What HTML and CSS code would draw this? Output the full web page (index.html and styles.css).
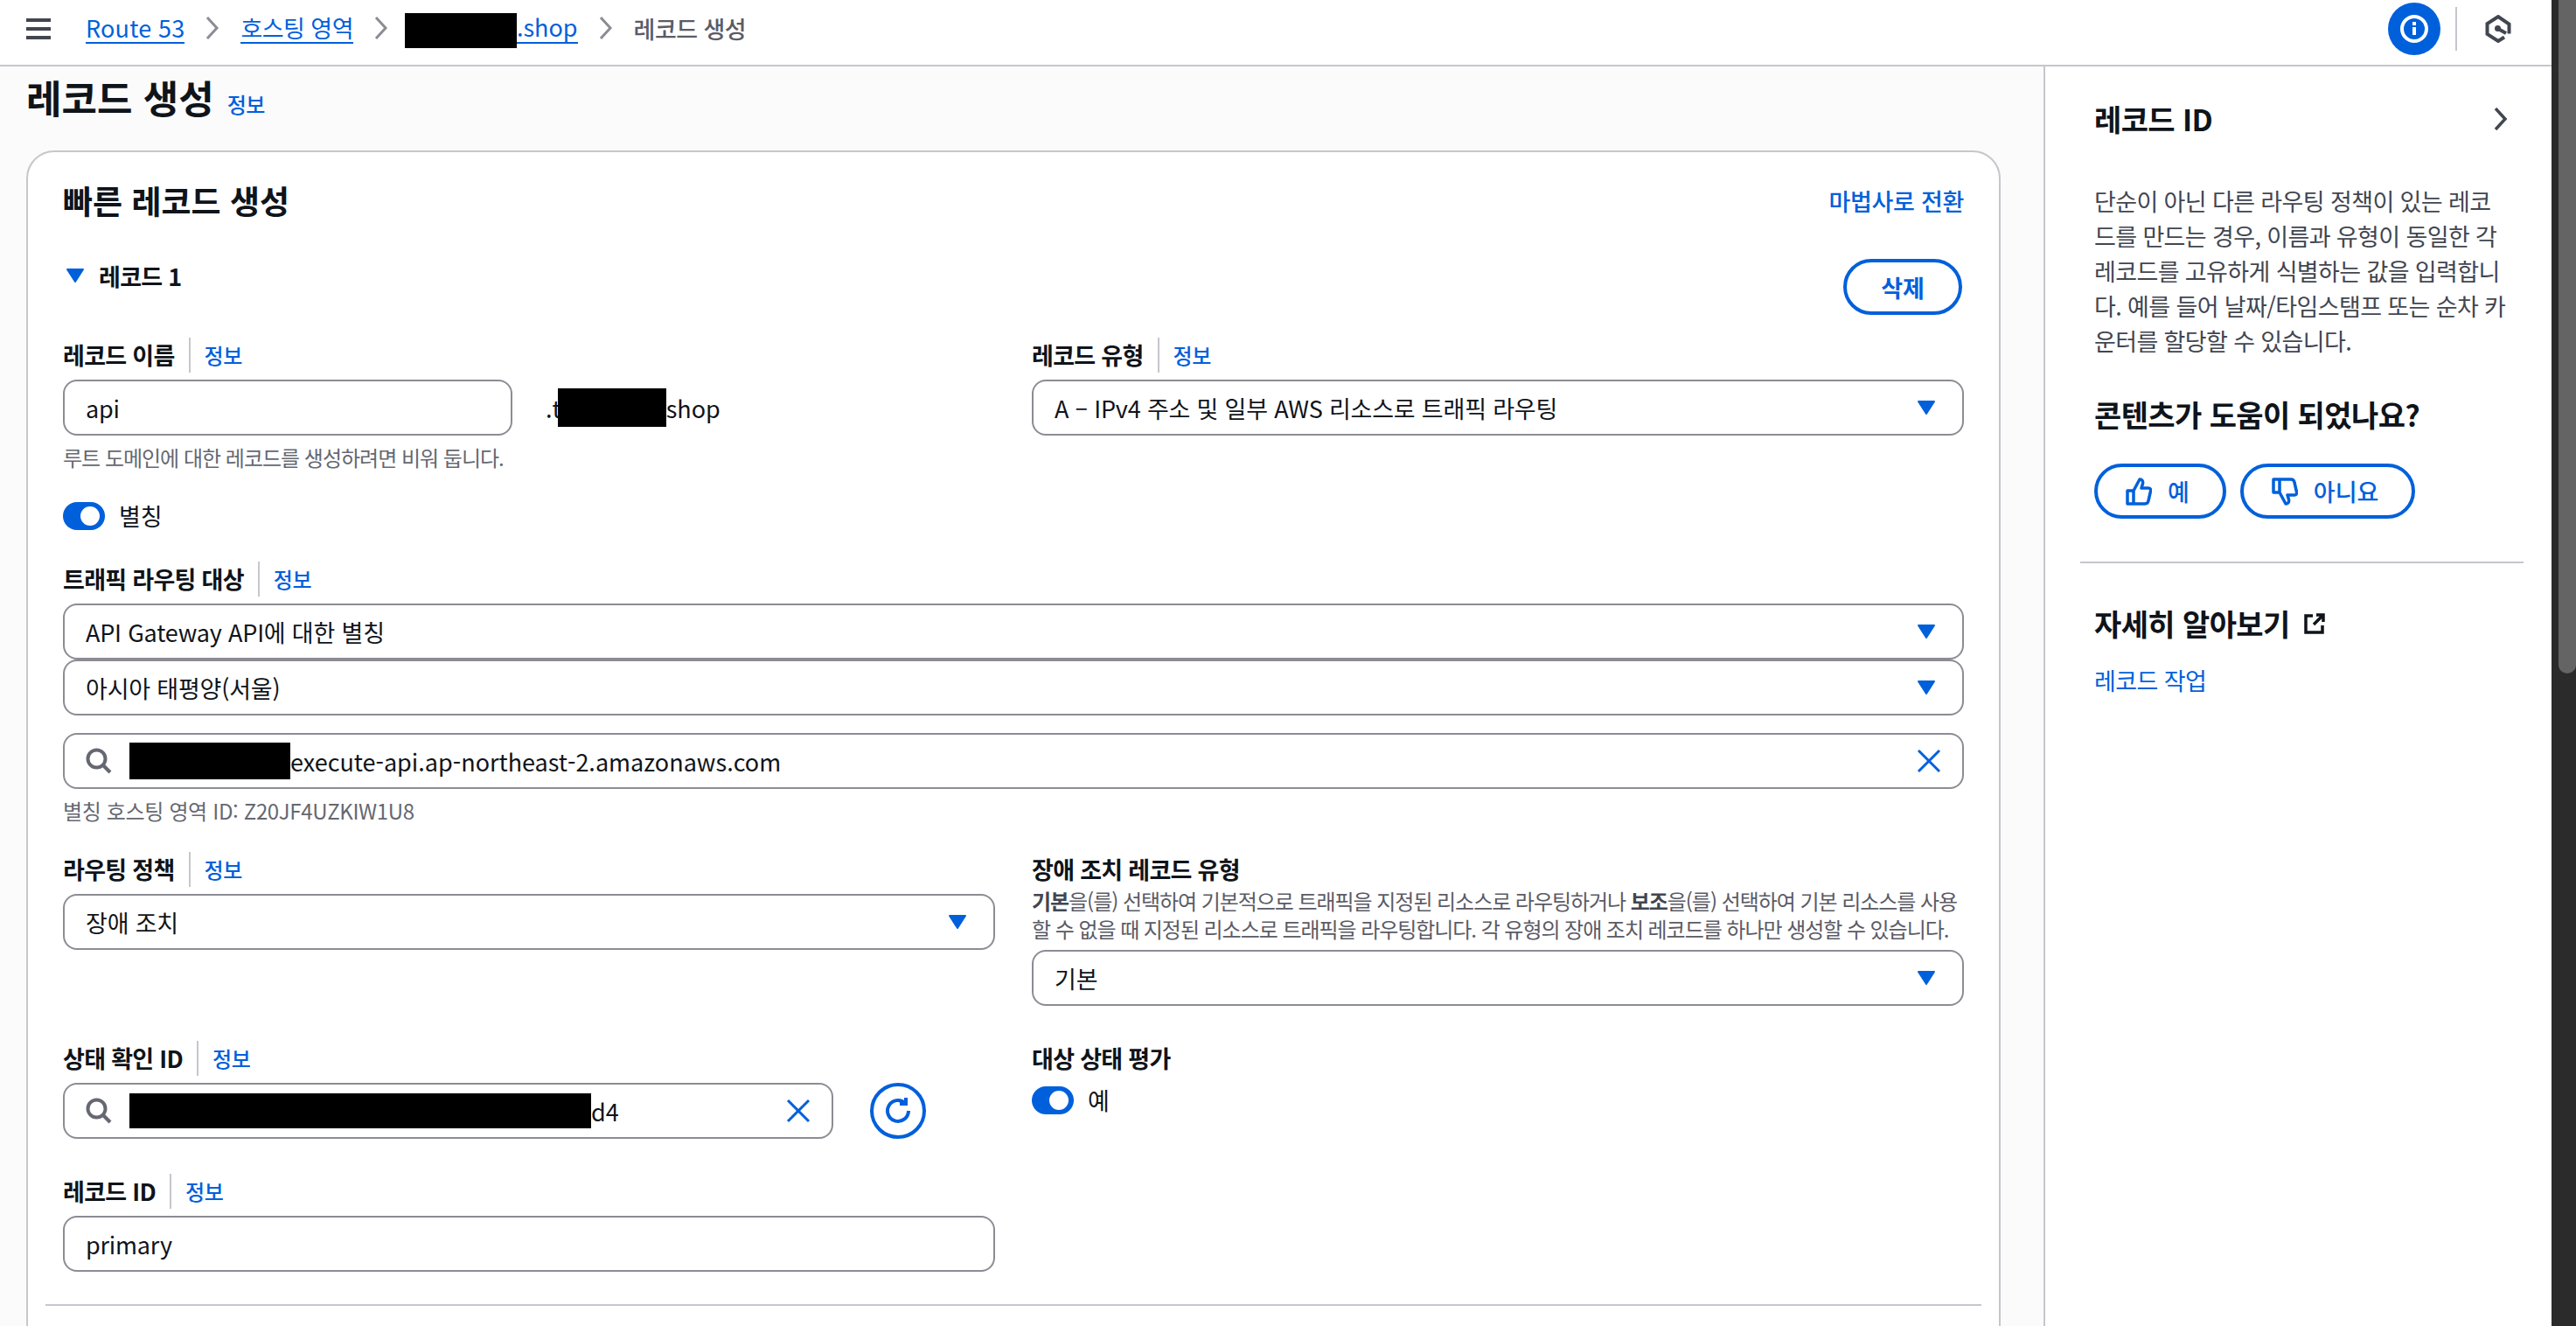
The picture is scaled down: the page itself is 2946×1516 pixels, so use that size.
FILE: index.html
```html
<!DOCTYPE html>
<html lang="ko">
<head>
<meta charset="utf-8">
<title>레코드 생성</title>
<link rel="stylesheet" href="styles.css">
</head>
<body>
<div class="app">
  <div class="page">
    <header class="topbar">
      <svg class="burger" viewBox="0 0 28 24"><path d="M0 2h28M0 12h28M0 22h28"/></svg>
      <nav class="crumbs">
        <a class="crumb crumb-en">Route 53</a>
        <svg class="chev" viewBox="0 0 16 26"><path d="M2 1l11 12L2 25"/></svg>
        <a class="crumb crumb-ko">호스팅 영역</a>
        <svg class="chev" viewBox="0 0 16 26"><path d="M2 1l11 12L2 25"/></svg>
        <a class="crumb crumb-domain"><span class="redact redact-crumb"></span>.shop</a>
        <svg class="chev" viewBox="0 0 16 26"><path d="M2 1l11 12L2 25"/></svg>
        <span class="crumb-current">레코드 생성</span>
      </nav>
      <div class="top-actions">
        <span class="info-btn">
          <svg viewBox="0 0 32 32" class="info-icon"><circle cx="16" cy="16" r="14"/><path d="M16 14v9M16 8v4"/></svg>
        </span>
        <span class="top-div"></span>
        <svg class="hex" viewBox="0 0 30 32"><path d="M27.5 21.5v-11L15 2 2.500 10v12L15 30l7-4.500"/><circle cx="14.500" cy="15.500" r="3.500" class="hex-dot"/><path d="M15 16l9 5"/></svg>
      </div>
    </header>
    <div class="workspace">
      <main class="content">
        <div class="page-head">
          <h1>레코드 생성</h1>
          <a class="info-link">정보</a>
        </div>
        <section class="card">
          <div class="card-head">
            <h2>빠른 레코드 생성</h2>
            <a class="wizard">마법사로 전환</a>
          </div>
          <div class="record-head">
            <div class="record-title">
              <svg class="caret caret-title" viewBox="0 0 22 18"><path d="M2 2h18l-9 14z"/></svg>
              <span>레코드 1</span>
            </div>
            <button class="btn-delete">삭제</button>
          </div>

          <div class="grid grid-first">
            <div>
              <div class="label-row"><span class="label">레코드 이름</span><a class="label-info">정보</a></div>
              <div class="name-row">
                <div class="field field-name"><span>api</span></div>
                <div class="suffix">.t<span class="redact redact-suffix"></span>shop</div>
              </div>
              <p class="hint hint-name">루트 도메인에 대한 레코드를 생성하려면 비워 둡니다.</p>
            </div>
            <div>
              <div class="label-row"><span class="label">레코드 유형</span><a class="label-info">정보</a></div>
              <div class="field">
                <span>A – IPv4 주소 및 일부 AWS 리소스로 트래픽 라우팅</span>
                <svg class="caret" viewBox="0 0 22 18"><path d="M2 2h18l-9 14z"/></svg>
              </div>
            </div>
          </div>

          <div class="toggle-row toggle-alias">
            <span class="toggle"><span class="knob"></span></span>
            <span class="toggle-text">별칭</span>
          </div>

          <div class="label-row label-route"><span class="label">트래픽 라우팅 대상</span><a class="label-info">정보</a></div>
          <div class="field">
            <span>API Gateway API에 대한 별칭</span>
            <svg class="caret" viewBox="0 0 22 18"><path d="M2 2h18l-9 14z"/></svg>
          </div>
          <div class="field">
            <span>아시아 태평양(서울)</span>
            <svg class="caret" viewBox="0 0 22 18"><path d="M2 2h18l-9 14z"/></svg>
          </div>
          <div class="field field-search">
            <svg class="search" viewBox="0 0 30 30"><circle cx="12.500" cy="12.500" r="10"/><path d="M20 20l8 8"/></svg>
            <span class="search-text"><span class="redact redact-api"></span>execute-api.ap-northeast-2.amazonaws.com</span>
            <svg class="clear" viewBox="0 0 28 28"><path d="M2 2l24 24M26 2L2 26"/></svg>
          </div>
          <p class="hint hint-zone">별칭 호스팅 영역 ID: Z20JF4UZKIW1U8</p>

          <div class="grid grid-policy">
            <div>
              <div class="label-row"><span class="label">라우팅 정책</span><a class="label-info">정보</a></div>
              <div class="field">
                <span>장애 조치</span>
                <svg class="caret" viewBox="0 0 22 18"><path d="M2 2h18l-9 14z"/></svg>
              </div>
            </div>
            <div>
              <div class="label-row"><span class="label">장애 조치 레코드 유형</span></div>
              <p class="desc"><b>기본</b>을(를) 선택하여 기본적으로 트래픽을 지정된 리소스로 라우팅하거나 <b>보조</b>을(를) 선택하여 기본 리소스를 사용할 수 없을 때 지정된 리소스로 트래픽을 라우팅합니다. 각 유형의 장애 조치 레코드를 하나만 생성할 수 있습니다.</p>
              <div class="field">
                <span>기본</span>
                <svg class="caret" viewBox="0 0 22 18"><path d="M2 2h18l-9 14z"/></svg>
              </div>
            </div>
          </div>

          <div class="grid grid-health">
            <div>
              <div class="label-row"><span class="label">상태 확인 ID</span><a class="label-info">정보</a></div>
              <div class="health-row">
                <div class="field field-search field-health">
                  <svg class="search" viewBox="0 0 30 30"><circle cx="12.500" cy="12.500" r="10"/><path d="M20 20l8 8"/></svg>
                  <span class="search-text"><span class="redact redact-health"></span>d4</span>
                  <svg class="clear" viewBox="0 0 28 28"><path d="M2 2l24 24M26 2L2 26"/></svg>
                </div>
                <span class="refresh">
                  <svg viewBox="0 0 34 34"><path d="M29 17a12 12 0 1 1-4-9"/><path d="M26 2v7h-7"/></svg>
                </span>
              </div>
            </div>
            <div>
              <div class="label-row"><span class="label">대상 상태 평가</span></div>
              <div class="toggle-row toggle-health">
                <span class="toggle"><span class="knob"></span></span>
                <span class="toggle-text">예</span>
              </div>
            </div>
          </div>

          <div class="label-row label-recid"><span class="label">레코드 ID</span><a class="label-info">정보</a></div>
          <div class="field field-half"><span>primary</span></div>
          <hr class="card-rule">
        </section>
      </main>

      <aside class="panel">
        <div class="panel-head">
          <h3>레코드 ID</h3>
          <svg class="panel-close" viewBox="0 0 16 26"><path d="M2 1l11 12L2 25"/></svg>
        </div>
        <p class="panel-text">단순이 아닌 다른 라우팅 정책이 있는 레코드를 만드는 경우, 이름과 유형이 동일한 각 레코드를 고유하게 식별하는 값을 입력합니다. 예를 들어 날짜/타임스탬프 또는 순차 카운터를 할당할 수 있습니다.</p>
        <h3 class="panel-q">콘텐츠가 도움이 되었나요?</h3>
        <div class="feedback">
          <button class="btn-fb btn-yes">
            <svg viewBox="0 0 30 32"><path d="M9 15H2v15h7zM9 15l7-13c3 0 4 2 3.500 5L18 12h8c2 0 3 1.500 2.500 3.500l-2.500 11c-.5 2.500-2 3.500-4 3.500H9z"/></svg>
            <span>예</span>
          </button>
          <button class="btn-fb btn-no">
            <svg viewBox="0 0 30 32"><path d="M9 17H2V2h7zM9 17l7 13c3 0 4-2 3.500-5L18 20h8c2 0 3-1.500 2.500-3.500L26 5.500C25.500 3 24 2 22 2H9z"/></svg>
            <span>아니요</span>
          </button>
        </div>
        <hr class="panel-rule">
        <div class="learn">
          <h3>자세히 알아보기</h3>
          <svg class="ext" viewBox="0 0 24 24"><path d="M10 3H2v19h19v-8M11 13L22 2M14 2h8v8"/></svg>
        </div>
        <a class="panel-link">레코드 작업</a>
      </aside>
    </div>
  </div>
  <div class="scrollbar"><div class="thumb"></div></div>
</div>
</body>
</html>
```
FILE: styles.css
```css
* { box-sizing: border-box; }
html, body { margin: 0; height: 100%; overflow: hidden; }
body {
  font-family: "Noto Sans CJK KR", "Noto Sans", sans-serif;
  font-size: 27px;
  color: #0f141a;
  background: #fff;
}
h1, h2, h3, p { margin: 0; }
a { color: #0060db; }

.app { display: flex; height: 1516px; }
.page { flex: 1; display: flex; flex-direction: column; min-width: 0; }

.scrollbar { width: 28px; background: #2b2b2b; padding-left: 8px; }
.thumb { height: 770px; background: #646464; border-radius: 0 0 10px 10px; }

.topbar {
  height: 76px;
  border-bottom: 2px solid #c6c6cd;
  display: flex;
  align-items: center;
  padding-left: 30px;
  background: #fff;
  flex: none;
}
.burger { width: 28px; height: 24px; stroke: #424650; stroke-width: 4; fill: none; margin-top: -8px; }
.crumbs { display: flex; align-items: center; margin-left: 40px; margin-top: -10px; }
.crumb {
  font-size: 27px;
  line-height: 36px;
  border-bottom: 2px solid #0060db;
  height: 36px;
}
.crumb-en { letter-spacing: .2px; }
.crumb-ko { letter-spacing: -.55px; }
.chev { width: 16px; height: 26px; fill: none; stroke: #8c8c94; stroke-width: 3; margin: 0 24px; flex: none; }
.crumb-domain { display: flex; align-items: center; margin-left: -5px; }
.redact { display: inline-block; background: #000; flex: none; }
.redact-crumb { width: 128px; height: 40px; margin-bottom: -8px; }
.crumb-current { font-size: 27px; font-weight: 500; color: #5b5b66; letter-spacing: -.55px; }

.top-actions { margin-left: auto; display: flex; align-items: center; margin-top: -8px; }
.info-btn { width: 60px; height: 60px; border-radius: 50%; background: #0060db; display: flex; align-items: center; justify-content: center; }
.info-icon { width: 32px; height: 32px; fill: none; stroke: #fff; stroke-width: 4; }
.top-div { width: 2px; height: 50px; background: #c6c6cd; margin-left: 17px; }
.hex { width: 30px; height: 32px; margin: 0 46px 0 32px; fill: none; stroke: #424650; stroke-width: 4; }
.hex-dot { fill: #424650; stroke: none; }

.workspace { flex: 1; display: flex; min-height: 0; }
.content { width: 2337px; flex: none; padding: 7px 49px 0 30px; background: #fbfbfb; overflow: hidden; }
.page-head { display: flex; align-items: baseline; height: 56px; margin-bottom: 33px; }
h1 { font-size: 44px; line-height: 56px; font-weight: 700; }
.info-link { font-size: 24px; font-weight: 500; margin-left: 15px; letter-spacing: -.5px; position: relative; top: -1px; }

.card {
  border: 2px solid #c6c6cd;
  border-radius: 32px;
  background: #fff;
  padding: 31px 40px 60px;
  height: 1400px;
}
.card-head { display: flex; justify-content: space-between; align-items: center; height: 48px; }
h2 { font-size: 37px; line-height: 48px; font-weight: 700; }
.wizard { font-size: 27px; font-weight: 500; letter-spacing: -.3px; }
.record-head { display: flex; justify-content: space-between; align-items: flex-start; margin-top: 42px; height: 65px; }
.record-title { display: flex; align-items: center; height: 40px; font-size: 27px; font-weight: 700; letter-spacing: -.7px; }
.caret { width: 22px; height: 18px; fill: #0060db; stroke: #0060db; stroke-width: 2; stroke-linejoin: round; flex: none; }
.caret-title { margin: 0 16px 0 3px; }
.btn-delete {
  width: 136px;
  height: 64px;
  margin-top: 1px;
  margin-right: 2px;
  border: 4px solid #0060db;
  border-radius: 32px;
  background: #fff;
  color: #0060db;
  font: 700 27px "Noto Sans CJK KR", sans-serif;
  padding: 0;
}

.grid { display: grid; grid-template-columns: 1066px 1066px; column-gap: 42px; }
.grid-first { margin-top: 26px; }
.grid-policy { margin-top: 31px; }
.grid-health { margin-top: 40px; }

.label-row { display: flex; align-items: center; height: 40px; margin-bottom: 8px; }
.label { font-size: 27px; font-weight: 700; line-height: 40px; padding-right: 16px; letter-spacing: -.7px; }
.label-info { font-size: 24px; font-weight: 500; line-height: 40px; border-left: 2px solid #c6c6cd; padding-left: 16px; letter-spacing: -.5px; }
.label-route { margin-top: 36px; }
.label-recid { margin-top: 40px; }

.field {
  height: 64px;
  border: 2px solid #8c8c94;
  border-radius: 16px;
  background: #fff;
  display: flex;
  align-items: center;
  justify-content: space-between;
  padding: 0 30px 0 24px;
  font-size: 27px;
  letter-spacing: -.2px;
  white-space: nowrap;
}
.field-half { width: 1066px; }
.name-row { display: flex; align-items: center; }
.field-name { width: 514px; flex: none; }
.suffix { margin-left: 38px; font-size: 27px; display: flex; align-items: center; }
.redact-suffix { width: 124px; height: 44px; margin-left: -4px; }
.hint { font-size: 24px; line-height: 32px; color: #656871; letter-spacing: -1px; }
.hint-name { margin-top: 9px; }
.hint-zone { margin-top: 9px; letter-spacing: -.35px; }

.toggle-row { display: flex; align-items: center; }
.toggle-alias { margin-top: 35px; }
.toggle-health { margin-top: 12px; }
.toggle { width: 48px; height: 32px; border-radius: 16px; background: #0060db; display: flex; align-items: center; justify-content: flex-end; padding-right: 6px; flex: none; }
.knob { width: 22px; height: 22px; border-radius: 50%; background: #fff; }
.toggle-text { font-size: 27px; margin-left: 16px; line-height: 32px; }

.field-search { justify-content: flex-start; margin-top: 20px; padding-right: 24px; letter-spacing: 0; }
.search { width: 30px; height: 30px; fill: none; stroke: #656871; stroke-width: 4; flex: none; }
.search-text { display: flex; align-items: center; margin-left: 20px; }
.redact-api { width: 184px; height: 42px; }
.redact-health { width: 528px; height: 40px; }
.clear { width: 28px; height: 28px; fill: none; stroke: #0060db; stroke-width: 3; margin-left: auto; flex: none; }
.health-row { display: flex; align-items: center; }
.field-health { width: 881px; margin-top: 0; flex: none; }
.refresh { width: 64px; height: 64px; margin-left: 42px; border: 4px solid #0060db; border-radius: 50%; display: flex; align-items: center; justify-content: center; flex: none; }
.refresh svg { width: 34px; height: 34px; fill: none; stroke: #0060db; stroke-width: 4; }

.desc { font-size: 24px; line-height: 32px; color: #5b5b66; letter-spacing: -1.05px; margin-top: -8px; margin-bottom: 8px; }
.desc b { font-weight: 700; color: #424650; }

.card-rule { border: 0; border-top: 2px solid #c6c6cd; margin: 37px -20px 0; }

.panel { flex: 1; border-left: 2px solid #c6c6cd; background: #fff; padding: 38px 0 0 56px; }
.panel-head { display: flex; justify-content: space-between; align-items: center; height: 44px; padding-right: 50px; }
h3 { font-size: 34px; line-height: 44px; font-weight: 700; letter-spacing: -.6px; }
.panel-close { width: 16px; height: 26px; fill: none; stroke: #424650; stroke-width: 3.500; }
.panel-text { font-size: 27px; line-height: 40px; color: #424650; letter-spacing: -.62px; width: 476px; margin-top: 52px; }
.panel-q { margin-top: 42px; white-space: nowrap; }
.feedback { display: flex; gap: 16px; margin-top: 34px; }
.btn-fb {
  height: 63px;
  border: 4px solid #0060db;
  border-radius: 32px;
  background: #fff;
  color: #0060db;
  display: flex;
  align-items: center;
  font: 500 27px "Noto Sans CJK KR", sans-serif;
  padding: 0 38px 0 32px;
}
.btn-fb svg { width: 30px; height: 32px; fill: none; stroke: #0060db; stroke-width: 3.500; stroke-linejoin: round; margin-right: 18px; }
.panel-rule { border: 0; border-top: 2px solid #c6c6cd; margin: 49px 32px 0 -16px; }
.learn { display: flex; align-items: center; margin-top: 47px; }
.ext { width: 24px; height: 24px; fill: none; stroke: #0f141a; stroke-width: 3.500; margin-left: 16px; }
.panel-link { display: block; font-size: 27px; line-height: 40px; margin-top: 23px; letter-spacing: -.6px; }
```
